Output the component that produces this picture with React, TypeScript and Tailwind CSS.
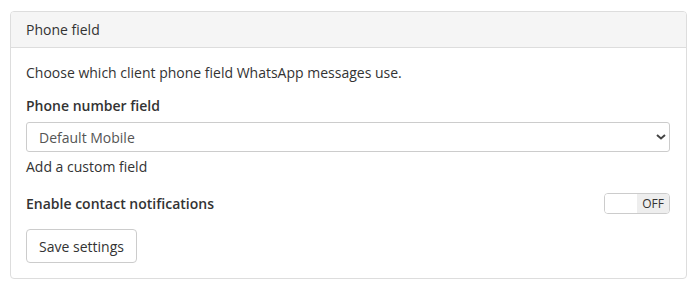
export default function App() {
  return (
    <div className="bg-white w-[698px] h-[290px] pt-[11px] px-[10px] text-[#333] text-[14px]" style={{ fontFamily: '"Open Sans", sans-serif' }}>
      <div className="w-[677px] h-[268px] border border-[#ddd] rounded-[4px] overflow-hidden">
        {/* Header */}
        <div className="h-[36px] bg-[#f5f5f5] border-b border-[#ddd] px-[15px] flex items-center">
          <span className="text-[14px] leading-5">Phone field</span>
        </div>

        {/* Body */}
        <div className="px-[15px] pt-[15px]">
          <p className="leading-5 mb-[13px]">Choose which client phone field WhatsApp messages use.</p>

          <label className="block font-semibold leading-5 mb-[6px]">Phone number field</label>
          <div className="relative w-[644px] h-[30px] border border-[#ccc] rounded-[3px] flex items-center pl-3 text-[#555]">
            <span>Default Mobile</span>
            <svg className="absolute right-[3px] top-[11px]" width="10" height="6" viewBox="0 0 10 6">
              <path d="M1 1 L5 4.5 L9 1" stroke="#444" strokeWidth="2" fill="none" />
            </svg>
          </div>
          <div className="leading-5 mt-[5px]">Add a custom field</div>

          <div className="flex items-center justify-between mt-[16px] w-[644px]">
            <span className="font-semibold leading-5">Enable contact notifications</span>
            <div className="w-[66px] h-[21px] border border-[#ccc] rounded-[4px] flex overflow-hidden text-[12px]">
              <div className="flex-1 bg-white" />
              <div className="w-[32px] bg-[#eee] flex items-center justify-center">OFF</div>
            </div>
          </div>

          <button className="mt-[15px] h-[34px] w-[111px] border border-[#ccc] rounded-[4px] bg-white text-[14px]">
            Save settings
          </button>
        </div>
      </div>
    </div>
  );
}
